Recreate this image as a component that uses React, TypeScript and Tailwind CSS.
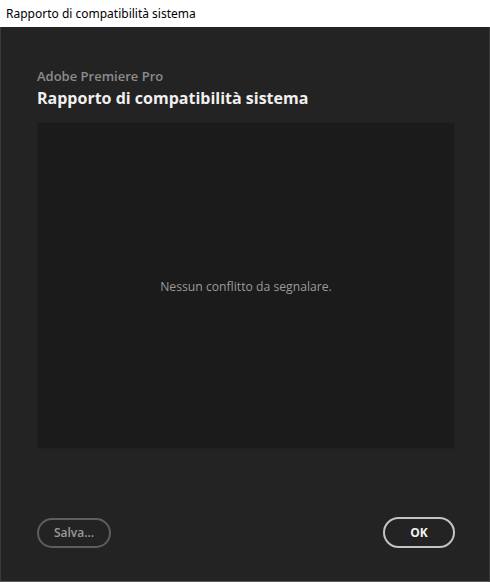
export default function App() {
  return (
    <div className="flex h-[582px] w-[490px] flex-col bg-white" style={{ fontFamily: '"Open Sans", "Noto Sans", sans-serif' }}>
      <div className="flex h-[27px] items-center pl-[6px] text-[12px] text-black" style={{ fontFamily: '"Noto Sans", "Open Sans", sans-serif' }}>
        Rapporto di compatibilità sistema
      </div>
      <div className="flex flex-1 flex-col border-x border-b border-x-[#3a3a3a] border-b-[#5a5a5a] bg-[#232323] pl-[36px] pr-[34px]">
        <div className="pt-[40px] text-[13px] font-semibold leading-[18px] text-[#8c8c8c]">Adobe Premiere Pro</div>
        <div className="mt-[1px] text-[16px] font-bold leading-[24px] text-[#f0f0f0]">
          Rapporto di compatibilità sistema
        </div>
        <div className="mt-[12px] flex h-[327px] items-center justify-center border border-[#202020] bg-[#1b1b1b]">
          <span className="mt-[3px] text-[12.2px] text-[#9a9a9a]">Nessun conflitto da segnalare.</span>
        </div>
        <div className="mt-[68px] flex items-center justify-between">
          <button className="flex h-[30px] w-[74px] items-center justify-center rounded-full border-2 border-[#5e5e5e] text-[12px] font-semibold text-[#9a9a9a]">
            Salva...
          </button>
          <button className="flex h-[31px] w-[72px] items-center justify-center rounded-full border-2 border-[#c4c4c4] text-[12px] font-bold text-[#f2f2f2]">
            OK
          </button>
        </div>
      </div>
    </div>
  );
}
